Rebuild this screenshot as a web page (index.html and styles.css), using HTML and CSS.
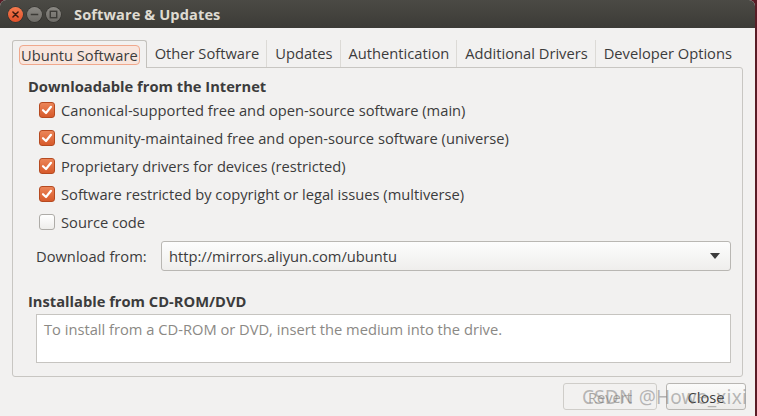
FILE: index.html
```html
<!DOCTYPE html>
<html>
<head>
<meta charset="utf-8">
<link rel="stylesheet" href="styles.css">
</head>
<body>
<div class="window">
  <div class="titlebar">
    <div class="wbtns">
      <span class="wb close"><svg width="15" height="15" viewBox="0 0 14 14"><path d="M4.6 4.6 L9.4 9.4 M9.4 4.6 L4.6 9.4" stroke="#3a1a10" stroke-width="1.4" stroke-linecap="round"/></svg></span>
      <span class="wb"><svg width="15" height="15" viewBox="0 0 14 14"><path d="M3.5 7 H10.5" stroke="#3c3b37" stroke-width="1.6"/></svg></span>
      <span class="wb"><svg width="15" height="15" viewBox="0 0 14 14"><rect x="4" y="4" width="6" height="6" fill="none" stroke="#3c3b37" stroke-width="1.3"/></svg></span>
    </div>
    <div class="title">Software &amp; Updates</div>
  </div>
  <div class="content">
    <div class="tabs">
      <div class="tab active"><span class="focus">Ubuntu Software</span></div>
      <div class="tab">Other Software</div>
      <div class="tab">Updates</div>
      <div class="tab">Authentication</div>
      <div class="tab">Additional Drivers</div>
      <div class="tab last">Developer Options</div>
    </div>
    <div class="panel">
      <div class="heading">Downloadable from the Internet</div>
      <div class="checks">
        <div class="row"><span class="cb on"><svg width="16" height="16" viewBox="0 0 16 16"><path d="M4 8.2 L7 11 L12 4.8" fill="none" stroke="#fff" stroke-width="2.2" stroke-linecap="round" stroke-linejoin="round"/></svg></span>Canonical-supported free and open-source software (main)</div>
        <div class="row"><span class="cb on"><svg width="16" height="16" viewBox="0 0 16 16"><path d="M4 8.2 L7 11 L12 4.8" fill="none" stroke="#fff" stroke-width="2.2" stroke-linecap="round" stroke-linejoin="round"/></svg></span>Community-maintained free and open-source software (universe)</div>
        <div class="row"><span class="cb on"><svg width="16" height="16" viewBox="0 0 16 16"><path d="M4 8.2 L7 11 L12 4.8" fill="none" stroke="#fff" stroke-width="2.2" stroke-linecap="round" stroke-linejoin="round"/></svg></span>Proprietary drivers for devices (restricted)</div>
        <div class="row"><span class="cb on"><svg width="16" height="16" viewBox="0 0 16 16"><path d="M4 8.2 L7 11 L12 4.8" fill="none" stroke="#fff" stroke-width="2.2" stroke-linecap="round" stroke-linejoin="round"/></svg></span>Software restricted by copyright or legal issues (multiverse)</div>
        <div class="row"><span class="cb"></span>Source code</div>
      </div>
      <div class="dlrow">
        <span class="dllabel">Download from:</span>
        <div class="combo">
          <span>http://mirrors.aliyun.com/ubuntu</span>
          <svg width="10" height="6" viewBox="0 0 10 6"><path d="M0 0 H10 L5 6 Z" fill="#3c3c3c"/></svg>
        </div>
      </div>
      <div class="heading h2">Installable from CD-ROM/DVD</div>
      <div class="cdbox">To install from a CD-ROM or DVD, insert the medium into the drive.</div>
    </div>
    <div class="actions">
      <div class="btn disabled">Revert</div>
      <div class="btn">Close</div>
    </div>
    <div class="watermark">CSDN @Howe_xixi</div>
  </div>
</div>
</body>
</html>
```
FILE: styles.css
```css
html, body {
  margin: 0;
  padding: 0;
}
body {
  width: 757px;
  height: 416px;
  background: #5a1c26;
  overflow: hidden;
  font-family: "Open Sans", "Noto Sans", sans-serif;
}
.window {
  width: 755px;
  height: 416px;
  background: #f2f1f0;
  border-top-left-radius: 6px;
  border-top-right-radius: 6px;
  overflow: hidden;
  display: flex;
  flex-direction: column;
}
.titlebar {
  height: 28px;
  background: linear-gradient(#4b4a45, #3c3b37);
  display: flex;
  align-items: center;
  padding-left: 8px;
  box-sizing: border-box;
}
.wbtns {
  display: flex;
  gap: 4px;
}
.wb {
  width: 15px;
  height: 15px;
  border-radius: 50%;
  background: linear-gradient(#8a8883, #6e6c67);
  box-shadow: 0 0 0 0.5px #2e2d29;
  display: flex;
}
.wb.close {
  background: linear-gradient(#f47a4e, #e0502a);
}
.title {
  margin-left: 13px;
  color: #dfdbd2;
  font-weight: bold;
  font-size: 14.6px;
  letter-spacing: 0.1px;
}
.content {
  flex: 1;
  position: relative;
  padding: 11px 12px 0 12px;
  color: #3c3c3c;
  font-size: 14.7px;
}
.tabs {
  display: flex;
  height: 28px;
  align-items: flex-end;
}
.tab {
  height: 27px;
  box-sizing: border-box;
  display: flex;
  align-items: center;
  padding: 0 7px 1px 8px;
  border-right: 1px solid #dcdad6;
  color: #3c3c3c;
  white-space: nowrap;
}
.tab.last {
  border-right: none;
}
.tab.active {
  height: 28px;
  border: 1px solid #c3c1bc;
  border-bottom: none;
  border-radius: 3px 3px 0 0;
  background: #f2f1f0;
  padding: 0 6px 0 6px;
  position: relative;
  z-index: 1;
  margin-bottom: -1px;
}
.focus {
  border: 1px solid #f0a88c;
  border-radius: 4px;
  background: #f8e6de;
  padding: 0 1px;
  line-height: 18px;
}
.panel {
  width: 731px;
  height: 310px;
  box-sizing: border-box;
  border: 1px solid #c8c6c2;
  border-radius: 0 3px 3px 3px;
  padding: 8px 0 0 15px;
}
.heading {
  font-weight: bold;
  color: #3c3c3c;
  line-height: 20px;
}
.checks {
  margin-top: 0;
  display: flex;
  flex-direction: column;
}
.row {
  height: 28px;
  display: flex;
  align-items: center;
  padding-left: 11px;
  white-space: nowrap;
}
.cb {
  width: 16px;
  height: 16px;
  box-sizing: border-box;
  border-radius: 3px;
  border: 1px solid #aeaca8;
  background: linear-gradient(#ffffff, #eeedeb);
  margin-right: 6px;
  display: flex;
}
.cb.on {
  border: 1px solid #b64a20;
  background: linear-gradient(#ec8558, #d75a2b);
}
.cb svg {
  margin: -1px;
}
.dlrow {
  display: flex;
  align-items: center;
  margin-top: 5px;
  padding-left: 8px;
  height: 30px;
}
.dllabel {
  width: 125px;
}
.combo {
  width: 570px;
  height: 30px;
  box-sizing: border-box;
  border: 1px solid #b9b7b3;
  border-radius: 3px;
  background: linear-gradient(#fdfdfd, #efeeec);
  display: flex;
  align-items: center;
  justify-content: space-between;
  padding: 0 10px 0 7px;
}
.h2 {
  margin-top: 20px;
}
.cdbox {
  margin: 3px 0 0 8px;
  width: 695px;
  height: 49px;
  box-sizing: border-box;
  border: 1px solid #c6c4c0;
  background: #ffffff;
  color: #8b8985;
  padding: 4px 7px;
  line-height: 20px;
}
.actions {
  display: flex;
  justify-content: flex-end;
  gap: 9px;
  margin-top: 6px;
  margin-right: -3px;
}
.btn {
  height: 27px;
  box-sizing: border-box;
  border: 1px solid #b8b6b2;
  border-radius: 3px;
  background: linear-gradient(#fbfbfa, #ecebe9);
  display: flex;
  align-items: center;
  justify-content: center;
  padding: 0 18px;
  color: #3c3c3c;
}
.btn.disabled {
  width: 94px;
  color: #a8a6a2;
  border-color: #cfcdc9;
  background: #f2f1f0;
}
.btn:not(.disabled) {
  width: 80px;
}
.watermark {
  position: absolute;
  right: 8px;
  bottom: 6px;
  font-family: "Noto Sans", sans-serif;
  font-size: 19px;
  color: rgba(120, 120, 120, 0.5);
  pointer-events: none;
  letter-spacing: 0.2px;
}
```
